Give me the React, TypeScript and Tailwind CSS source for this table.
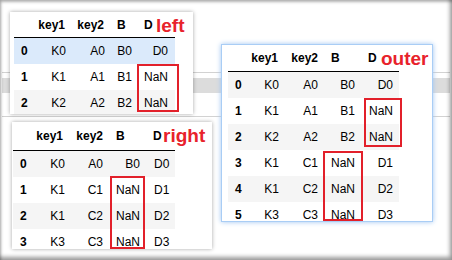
import React from 'react'

type Col = { w: string; head: string; cell: string }
type Panel = {
  pos: string
  frame: string
  pad: string
  headH: string
  cols: Col[]
  heads: string[]
  rows: { bg: string; cells: string[] }[]
  label: string
  labelPos: string
  boxes: string[]
}

const blue = 'bg-[#dbeafb]'
const gray = 'bg-[#f5f5f5]'
const white = 'bg-white'

const panels: Panel[] = [
  {
    pos: 'left-[10px] top-[12px] w-[183px] h-[102px]',
    frame: 'shadow-[0_0_4px_rgba(0,0,0,0.35)]',
    pad: 'pl-[4px]',
    headH: 'h-[26px]',
    cols: [
      { w: 'w-[20px]', head: 'pl-[7px]', cell: 'pl-[7px]' },
      { w: 'w-[34px]', head: 'justify-end pr-[3px]', cell: 'justify-end pr-[2px]' },
      { w: 'w-[39px]', head: 'justify-end pr-[3px]', cell: 'justify-end pr-[2px]' },
      { w: 'w-[28px]', head: 'pl-[10px]', cell: 'justify-end pr-[3px]' },
      { w: 'w-[40px]', head: 'pl-[9px]', cell: 'justify-end pr-[7px]' },
    ],
    heads: ['', 'key1', 'key2', 'B', 'D'],
    rows: [
      { bg: blue, cells: ['0', 'K0', 'A0', 'B0', 'D0'] },
      { bg: white, cells: ['1', 'K1', 'A1', 'B1', 'NaN'] },
      { bg: gray, cells: ['2', 'K2', 'A2', 'B2', 'NaN'] },
    ],
    label: 'left',
    labelPos: 'left-[146px] top-[4px]',
    boxes: ['left-[127px] top-[52px] w-[42px] h-[48px]'],
  },
  {
    pos: 'left-[12px] top-[122px] w-[200px] h-[127px]',
    frame: 'shadow-[0_0_4px_rgba(0,0,0,0.35)]',
    pad: 'pl-[1px]',
    headH: 'h-[29px]',
    cols: [
      { w: 'w-[20px]', head: 'pl-[7px]', cell: 'pl-[7px]' },
      { w: 'w-[34px]', head: 'justify-end pr-[4px]', cell: 'justify-end pr-[2px]' },
      { w: 'w-[38px]', head: 'justify-end pr-[2px]', cell: 'justify-end pr-[2px]' },
      { w: 'w-[39px]', head: 'pl-[11px]', cell: 'justify-end pr-[4px]' },
      { w: 'w-[31px]', head: 'pl-[9px]', cell: 'pl-[10px]' },
    ],
    heads: ['', 'key1', 'key2', 'B', 'D'],
    rows: [
      { bg: gray, cells: ['0', 'K0', 'A0', 'B0', 'D0'] },
      { bg: white, cells: ['1', 'K1', 'C1', 'NaN', 'D1'] },
      { bg: gray, cells: ['2', 'K1', 'C2', 'NaN', 'D2'] },
      { bg: white, cells: ['3', 'K3', 'C3', 'NaN', 'D3'] },
    ],
    label: 'right',
    labelPos: 'left-[151px] top-[4px]',
    boxes: ['left-[98px] top-[54px] w-[35px] h-[73px]'],
  },
  {
    pos: 'left-[221px] top-[44px] w-[212px] h-[178px]',
    frame: 'border border-[#a9cdf5] shadow-[0_0_5px_#9fc5f0]',
    pad: 'pl-[6px]',
    headH: 'h-[27px]',
    cols: [
      { w: 'w-[20px]', head: 'pl-[7px]', cell: 'pl-[7px]' },
      { w: 'w-[33px]', head: 'justify-end pr-[3px]', cell: 'justify-end pr-[2px]' },
      { w: 'w-[39px]', head: 'justify-end pr-[2px]', cell: 'justify-end pr-[2px]' },
      { w: 'w-[40px]', head: 'pl-[11px]', cell: 'justify-end pr-[5px]' },
      { w: 'w-[39px]', head: 'pl-[8px]', cell: 'justify-end pr-[6px]' },
    ],
    heads: ['', 'key1', 'key2', 'B', 'D'],
    rows: [
      { bg: gray, cells: ['0', 'K0', 'A0', 'B0', 'D0'] },
      { bg: white, cells: ['1', 'K1', 'A1', 'B1', 'NaN'] },
      { bg: gray, cells: ['2', 'K2', 'A2', 'B2', 'NaN'] },
      { bg: white, cells: ['3', 'K1', 'C1', 'NaN', 'D1'] },
      { bg: gray, cells: ['4', 'K1', 'C2', 'NaN', 'D2'] },
      { bg: white, cells: ['5', 'K3', 'C3', 'NaN', 'D3'] },
    ],
    label: 'outer',
    labelPos: 'left-[159px] top-[4px]',
    boxes: [
      'left-[142px] top-[53px] w-[38px] h-[49px]',
      'left-[101px] top-[106px] w-[40px] h-[70px]',
    ],
  },
]

const DataFrame = ({ p }: { p: Panel }) => (
  <div className={`absolute ${p.pos} ${p.frame} bg-white overflow-hidden`}>
    <div className={`${p.pad} text-[12px] text-black font-['Liberation_Sans',Arial,sans-serif]`}>
      <div className={`flex w-max ${p.headH} border-b border-black font-bold`}>
        {p.cols.map((c, i) => (
          <div key={i} className={`${c.w} ${c.head} flex items-center`}>{p.heads[i]}</div>
        ))}
      </div>
      {p.rows.map((r, ri) => (
        <div key={ri} className={`flex w-max h-[26px] ${r.bg}`}>
          {p.cols.map((c, i) => (
            <div key={i} className={`${c.w} ${c.cell} flex items-center ${i === 0 ? 'font-bold' : ''}`}>
              {r.cells[i]}
            </div>
          ))}
        </div>
      ))}
    </div>
    <span className={`absolute ${p.labelPos} text-[19px] leading-[19px] font-bold text-[#e8222b] font-['Liberation_Sans',Arial,sans-serif]`}>
      {p.label}
    </span>
    {p.boxes.map((b, i) => (
      <div key={i} className={`absolute ${b} border-2 border-[#e2202a]`} />
    ))}
  </div>
)

export default function App() {
  return (
    <div className="relative w-[452px] h-[260px] bg-white overflow-hidden">
      <div className="pt-[72px] px-[2px]">
        <div className="h-px bg-[#d2d2d2]" />
        <div className="mt-[5px] h-[15px] bg-[#dcdcdc]" />
        <div className="mt-[23px] h-px bg-[#d2d2d2]" />
      </div>
      {panels.map((p, i) => (
        <DataFrame key={i} p={p} />
      ))}
      <div className="absolute inset-0 pointer-events-none shadow-[inset_-2px_-3px_4px_rgba(0,0,0,0.4),inset_1px_2px_3px_rgba(0,0,0,0.3)]" />
    </div>
  )
}
